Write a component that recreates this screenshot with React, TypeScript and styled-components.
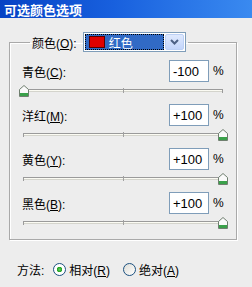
import styled, { createGlobalStyle } from "styled-components";

const GlobalStyle = createGlobalStyle`
  html, body {
    margin: 0;
    padding: 0;
    background: #ededed;
  }
  body {
    font-family: "Liberation Sans", "Noto Sans CJK SC", sans-serif;
    font-size: 12px;
    color: #000;
  }
`;

const Window = styled.div`
  width: 252px;
  height: 287px;
  background: #ededed;
  overflow: hidden;
`;

const TitleBar = styled.div`
  height: 18px;
  display: flex;
  align-items: center;
  padding-left: 4px;
  color: #fff;
  font-weight: bold;
  font-size: 13px;
  background: linear-gradient(90deg, #0642c4 0%, #1860de 45%, #3a8af0 100%);
`;

const Group = styled.fieldset`
  margin: 14px 0 0 9px;
  width: 228px;
  box-sizing: border-box;
  padding: 8px 12px 3px 12px;
  border: 1px solid #a9a9a9;
  box-shadow: inset 1px 1px 0 #fff, 1px 1px 0 #fff;
`;

const Legend = styled.legend`
  display: flex;
  align-items: center;
  gap: 6px;
  padding: 0 2px;
  margin-left: 8px;
`;

const Mnemonic = styled.u`
  text-decoration: underline;
`;

const Combo = styled.div`
  display: flex;
  width: 103px;
  height: 20px;
  box-sizing: border-box;
  border: 1px solid #7f9db9;
  background: #fff;
  padding: 1px;
`;

const ComboValue = styled.div`
  flex: 1;
  display: flex;
  align-items: center;
  gap: 4px;
  padding-left: 4px;
  background: #316ac5;
  color: #fff;
  outline: 1px dotted #000;
  outline-offset: -1px;
`;

const Swatch = styled.span`
  width: 16px;
  height: 12px;
  background: #e00000;
  box-shadow: inset 0 0 0 1px #5a0000;
`;

const ComboButton = styled.div`
  width: 17px;
  margin-left: 1px;
  display: flex;
  align-items: center;
  justify-content: center;
  border: 1px solid #bcd0f5;
  border-radius: 2px;
  background: linear-gradient(180deg, #dfe9fd 0%, #c3d5fb 100%);
`;

const Channel = styled.div`
  display: flex;
  flex-direction: column;
`;

const TopLine = styled.div`
  height: 22px;
  display: flex;
  align-items: center;
  justify-content: space-between;
`;

const ValueBox = styled.div`
  display: flex;
  align-items: center;
  gap: 4px;
`;

const NumberInput = styled.div`
  width: 40px;
  height: 22px;
  box-sizing: border-box;
  border: 1px solid #7f9db9;
  background: #fff;
  display: flex;
  align-items: center;
  padding-left: 3px;
  font-size: 13px;
`;

const Percent = styled.span`
  width: 11px;
  font-size: 12px;
`;

const Slider = styled.div`
  position: relative;
  height: 22px;
  width: 200px;
  margin-left: 1px;
`;

const Track = styled.div`
  position: absolute;
  left: 0;
  right: 0;
  top: 7px;
  height: 1px;
  border-top: 1px solid #9a9a9a;
  border-bottom: 1px solid #d4d4cc;
  background: #fbfbf3;
  &::before,
  &::after {
    content: "";
    position: absolute;
    top: -1px;
    width: 1px;
    height: 4px;
    background: #9a9a9a;
  }
  &::before {
    left: 0;
  }
  &::after {
    right: 0;
  }
`;

const MidTick = styled.span`
  position: absolute;
  left: 100px;
  top: 6px;
  width: 1px;
  height: 5px;
  background: #a0a0a0;
`;

const Thumb = styled.svg`
  position: absolute;
  top: 3px;
  margin-left: -5px;
`;

const MethodRow = styled.div`
  display: flex;
  align-items: center;
  height: 20px;
  margin: 19px 0 0 17px;
`;

const MethodLabel = styled.span`
  margin-right: 9px;
`;

const Radio = styled.label`
  display: flex;
  align-items: center;
  gap: 3px;
  margin-right: 13px;
`;

const RadioDot = styled.span<{ checked?: boolean }>`
  width: 13px;
  height: 13px;
  box-sizing: border-box;
  border-radius: 50%;
  border: 1px solid #1c5180;
  background: ${({ checked }) =>
    checked
      ? "radial-gradient(circle, #5fd05f 0%, #21a121 2.5px, #fff 3px, #fff 100%)"
      : "linear-gradient(135deg, #dcdcd6 0%, #fff 100%)"};
`;

interface ChannelData {
  name: string;
  key: string;
  value: number;
}

const channels: ChannelData[] = [
  { name: "青色", key: "C", value: -100 },
  { name: "洋红", key: "M", value: 100 },
  { name: "黄色", key: "Y", value: 100 },
  { name: "黑色", key: "B", value: 100 },
];

function SliderThumb({ value }: { value: number }) {
  const left = ((value + 100) / 200) * 199 + 1;
  return (
    <Thumb width="10" height="12" viewBox="0 0 10 12" style={{ left }}>
      <path d="M0.5 4.5 L5 0.5 L9.5 4.5 L9.5 11.5 L0.5 11.5 Z" fill="#fafafa" stroke="#6f7f6f" />
      <rect x="1" y="8" width="8" height="3" fill="#3aa14a" />
    </Thumb>
  );
}

function App() {
  return (
    <Window>
      <GlobalStyle />
      <TitleBar>可选颜色选项</TitleBar>
      <Group>
        <Legend>
          <span>
            颜色(<Mnemonic>O</Mnemonic>):
          </span>
          <Combo>
            <ComboValue>
              <Swatch />
              <span>红色</span>
            </ComboValue>
            <ComboButton>
              <svg width="9" height="6" viewBox="0 0 9 6">
                <path d="M1 1 L4.5 4.5 L8 1" fill="none" stroke="#4d6185" strokeWidth="2" />
              </svg>
            </ComboButton>
          </Combo>
        </Legend>
        {channels.map((c) => (
          <Channel key={c.key}>
            <TopLine>
              <span>
                {c.name}(<Mnemonic>{c.key}</Mnemonic>):
              </span>
              <ValueBox>
                <NumberInput>{c.value > 0 ? `+${c.value}` : c.value}</NumberInput>
                <Percent>%</Percent>
              </ValueBox>
            </TopLine>
            <Slider>
              <Track />
              <MidTick />
              <SliderThumb value={c.value} />
            </Slider>
          </Channel>
        ))}
      </Group>
      <MethodRow>
        <MethodLabel>方法:</MethodLabel>
        <Radio>
          <RadioDot checked />
          <span>
            相对(<Mnemonic>R</Mnemonic>)
          </span>
        </Radio>
        <Radio>
          <RadioDot />
          <span>
            绝对(<Mnemonic>A</Mnemonic>)
          </span>
        </Radio>
      </MethodRow>
    </Window>
  );
}

export default App;
